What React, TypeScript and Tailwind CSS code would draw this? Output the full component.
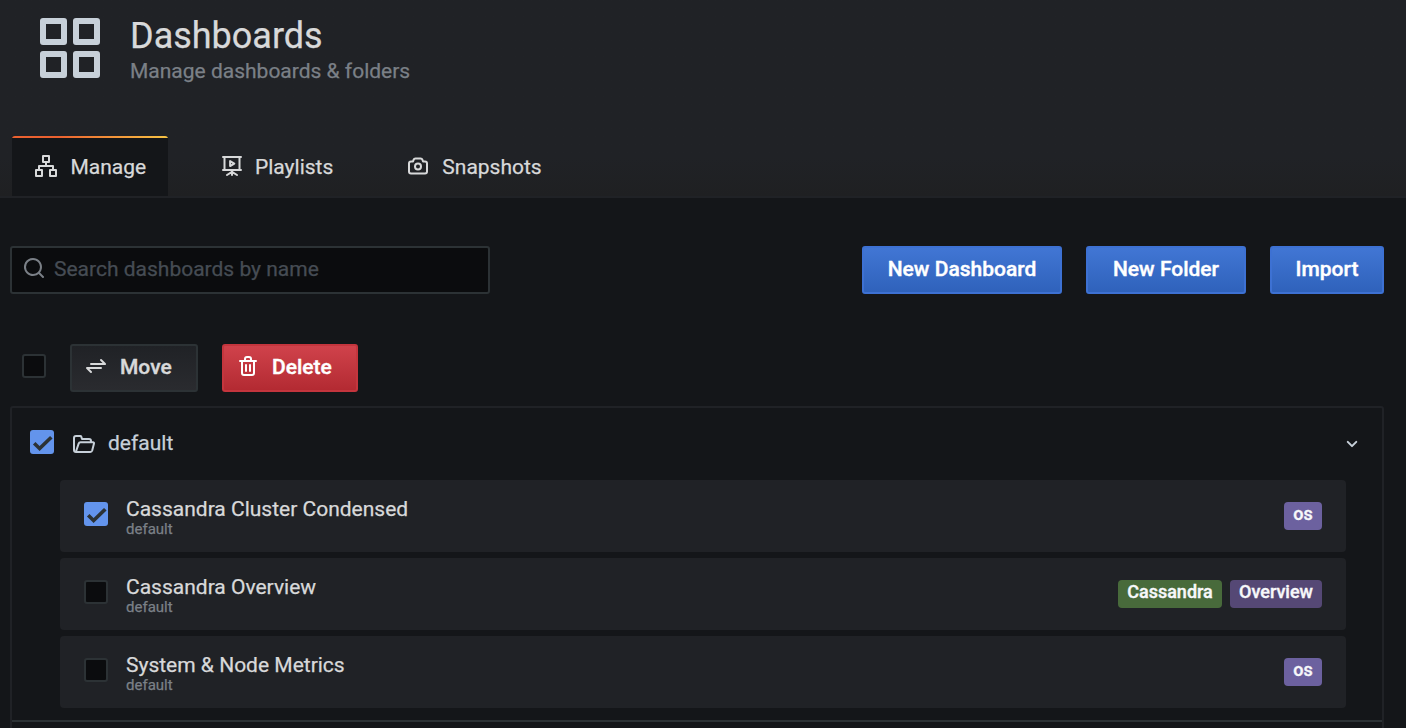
import React from 'react';

const icons = {
  apps: 'M10,13H3a1,1,0,0,0-1,1v7a1,1,0,0,0,1,1h7a1,1,0,0,0,1-1V14A1,1,0,0,0,10,13ZM9,20H4V15H9ZM21,2H14a1,1,0,0,0-1,1v7a1,1,0,0,0,1,1h7a1,1,0,0,0,1-1V3A1,1,0,0,0,21,2ZM20,9H15V4h5Zm1,4H14a1,1,0,0,0-1,1v7a1,1,0,0,0,1,1h7a1,1,0,0,0,1-1V14A1,1,0,0,0,21,13Zm-1,7H15V15h5ZM10,2H3A1,1,0,0,0,2,3v7a1,1,0,0,0,1,1h7a1,1,0,0,0,1-1V3A1,1,0,0,0,10,2ZM9,9H4V4H9Z',
  sitemap:
    'M22,15H20V12a1,1,0,0,0-1-1H13V9h2a1,1,0,0,0,1-1V2a1,1,0,0,0-1-1H9A1,1,0,0,0,8,2V8A1,1,0,0,0,9,9h2v2H5a1,1,0,0,0-1,1v3H2a1,1,0,0,0-1,1v6a1,1,0,0,0,1,1H8a1,1,0,0,0,1-1V16a1,1,0,0,0-1-1H6V13H18v2H16a1,1,0,0,0-1,1v6a1,1,0,0,0,1,1h6a1,1,0,0,0,1-1V16A1,1,0,0,0,22,15ZM7,17v4H3V17ZM10,7V3h4V7ZM21,21H17V17h4Z',
  camera:
    'M19,6.5H17.72l-.32-1a3,3,0,0,0-2.84-2H9.44A3,3,0,0,0,6.6,5.55l-.32,1H5a3,3,0,0,0-3,3v8a3,3,0,0,0,3,3H19a3,3,0,0,0,3-3v-8A3,3,0,0,0,19,6.5Zm1,11a1,1,0,0,1-1,1H5a1,1,0,0,1-1-1v-8a1,1,0,0,1,1-1H7a1,1,0,0,0,1-.68l.54-1.64a1,1,0,0,1,.95-.68h5.12a1,1,0,0,1,.95.68l.54,1.64a1,1,0,0,0,.9.68h2a1,1,0,0,1,1,1Zm-8-9a4,4,0,1,0,4,4A4,4,0,0,0,12,8.5Zm0,6a2,2,0,1,1,2-2A2,2,0,0,1,12,14.5Z',
  search:
    'M21.71,20.29,18,16.61A9,9,0,1,0,16.61,18l3.68,3.68a1,1,0,0,0,1.42,0A1,1,0,0,0,21.71,20.29ZM11,18a7,7,0,1,1,7-7A7,7,0,0,1,11,18Z',
  exchange:
    'M21.71,9.29l-4-4a1,1,0,0,0-1.42,1.42L18.59,9H7a1,1,0,0,0,0,2H21a1,1,0,0,0,.92-.62A1,1,0,0,0,21.71,9.29ZM17,13H3a1,1,0,0,0-.92.62,1,1,0,0,0,.21,1.09l4,4a1,1,0,0,0,1.42,0,1,1,0,0,0,0-1.42L5.41,15H17a1,1,0,0,0,0-2Z',
  trash:
    'M10,18a1,1,0,0,0,1-1V11a1,1,0,0,0-2,0v6A1,1,0,0,0,10,18ZM20,6H16V5a3,3,0,0,0-3-3H11A3,3,0,0,0,8,5V6H4A1,1,0,0,0,4,8H5V19a3,3,0,0,0,3,3h8a3,3,0,0,0,3-3V8h1a1,1,0,0,0,0-2ZM10,5a1,1,0,0,1,1-1h2a1,1,0,0,1,1,1V6H10Zm7,14a1,1,0,0,1-1,1H8a1,1,0,0,1-1-1V8H17Zm-3-1a1,1,0,0,0,1-1V11a1,1,0,0,0-2,0v6A1,1,0,0,0,14,18Z',
  angleDown:
    'M17,9.17a1,1,0,0,0-1.41,0L12,12.71,8.46,9.17a1,1,0,0,0-1.41,0,1,1,0,0,0,0,1.42l4.24,4.24a1,1,0,0,0,1.42,0L17,10.59A1,1,0,0,0,17,9.17Z',
};

function Icon({ name, className = 'size-6' }: { name: keyof typeof icons; className?: string }) {
  return (
    <svg viewBox="0 0 24 24" fill="currentColor" className={`shrink-0 ${className}`}>
      <path d={icons[name]} />
    </svg>
  );
}

function PresentationIcon() {
  return (
    <svg viewBox="0 0 24 24" fill="none" stroke="currentColor" strokeWidth="2" strokeLinecap="round" strokeLinejoin="round" className="size-6 shrink-0">
      <path d="M3 3h18M4.5 3v12.5M19.5 3v12.5M3 16h18M12 16v5M12 17.8l-5 3.2M12 17.8l5 3.2" />
      <path d="M10.1 7.1v5l4.2-2.5z" strokeWidth="2" />
    </svg>
  );
}

function FolderOpenIcon() {
  return (
    <svg viewBox="0 0 24 24" fill="none" stroke="currentColor" strokeWidth="2" strokeLinecap="round" strokeLinejoin="round" className="size-6 shrink-0">
      <path d="M5.6 20H4a2 2 0 0 1-2-2V6a2 2 0 0 1 2-2h4.3a1 1 0 0 1 .95.68L10 7h7a2 2 0 0 1 2 2v1" />
      <path d="M8.6 10.2H21a1 1 0 0 1 1 1.25l-1.8 7.1A2 2 0 0 1 18.3 20H5.2a1 1 0 0 1-.95-1.3l2.4-7.1a2 2 0 0 1 1.95-1.4z" />
    </svg>
  );
}

function Checkbox({ checked = false }: { checked?: boolean }) {
  return checked ? (
    <span className="block size-6 shrink-0 rounded-[3px] bg-[#6394ec]">
      <svg viewBox="0 0 24 24" fill="none" stroke="#2c3235" strokeWidth="3.6" className="size-6">
        <path d="M4.2 13.3l5.4 5.2L21.3 7.2" />
      </svg>
    </span>
  ) : (
    <span className="block size-6 shrink-0 rounded-[3px] border-2 border-[#2c3235] bg-[#0b0c0e]" />
  );
}

const tagColors = {
  violet: 'bg-[#6c619f]',
  green: 'bg-[#486a3b]',
  plum: 'bg-[#554875]',
};

type Tag = { label: string; color: keyof typeof tagColors; width: string };

const dashboards: { title: string; checked: boolean; tags: Tag[] }[] = [
  { title: 'Cassandra Cluster Condensed', checked: true, tags: [{ label: 'os', color: 'violet', width: 'w-[38px]' }] },
  {
    title: 'Cassandra Overview',
    checked: false,
    tags: [
      { label: 'Cassandra', color: 'green', width: 'w-[104px]' },
      { label: 'Overview', color: 'plum', width: 'w-[92px]' },
    ],
  },
  { title: 'System & Node Metrics', checked: false, tags: [{ label: 'os', color: 'violet', width: 'w-[38px]' }] },
];

function PrimaryButton({ label, width }: { label: string; width: string }) {
  return (
    <button
      className={`flex h-12 items-center justify-center rounded-[3px] border-2 border-[#3d71d3] bg-linear-to-b from-[#4176d4] to-[#2f62bb] pb-0.5 text-[21px] font-medium text-white [-webkit-text-stroke:0.4px] ${width}`}
    >
      {label}
    </button>
  );
}

export default function App() {
  return (
    <div className="h-[728px] overflow-hidden bg-[#141619] font-[Roboto,sans-serif] text-[21px] leading-[30px] text-[#d8d9da] [-webkit-text-stroke:0.25px]">
      <header className="flex h-[198px] flex-col justify-between border-b-2 border-[#202226] bg-linear-to-b from-[#202226] from-80% to-[#1f2022]">
        <div className="flex pt-3 pl-[34px]">
          <Icon name="apps" className="size-[72px] text-[#c7d0d9]" />
          <div className="pl-6">
            <h1 className="pt-[3px] text-[36px] leading-[42px]">Dashboards</h1>
            <p className="pt-px text-[#7b8087] leading-[26px]">Manage dashboards &amp; folders</p>
          </div>
        </div>
        <nav className="flex h-[60px] pl-3">
          <a className="flex w-[156px] flex-col overflow-hidden rounded-t-[3px] bg-[#141619]">
            <span className="h-0.5 bg-linear-to-r from-[#eb6130] from-30% to-[#f6c344]" />
            <span className="flex h-14 items-center gap-[12.5px] pl-[22px]">
              <Icon name="sitemap" />
              <span className="pt-0.5">Manage</span>
            </span>
          </a>
          <a className="ml-[52px] flex h-[58px] items-center gap-[11px] pt-0.5">
            <PresentationIcon />
            <span className="pt-0.5">Playlists</span>
          </a>
          <a className="ml-[73px] flex h-[58px] items-center gap-3 pt-0.5">
            <Icon name="camera" />
            <span className="pt-0.5">Snapshots</span>
          </a>
        </nav>
      </header>

      <main className="pr-[22px] pl-2.5">
        <div className="flex gap-6 pt-12">
          <div className="mr-auto flex h-12 w-[480px] items-center gap-2 rounded-[3px] border-2 border-[#2c3235] bg-[#0b0c0e] pb-1 pl-2.5 text-[#464c54]">
            <Icon name="search" className="size-6 text-[#7b8087]" />
            <span className="pt-0.5">Search dashboards by name</span>
          </div>
          <PrimaryButton label="New Dashboard" width="w-[200px]" />
          <PrimaryButton label="New Folder" width="w-[160px]" />
          <PrimaryButton label="Import" width="w-[114px]" />
        </div>

        <div className="flex pt-[50px] pl-3">
          <div className="mr-6 pt-2.5">
            <Checkbox />
          </div>
          <button className="mr-6 flex h-12 w-32 items-center gap-3 rounded-[3px] border-2 border-[#2c3235] bg-linear-to-b from-[#202226] to-[#2a2b2f] pb-1 pl-3 font-medium [-webkit-text-stroke:0.4px]">
            <Icon name="exchange" />
            <span className="pt-0.5">Move</span>
          </button>
          <button className="flex h-12 w-[136px] items-center gap-3 rounded-[3px] border-2 border-[#c4353d] bg-linear-to-b from-[#d0424b] to-[#b32a32] pb-1 pl-3 font-medium text-white [-webkit-text-stroke:0.4px]">
            <Icon name="trash" />
            <span className="pt-0.5">Delete</span>
          </button>
        </div>

        <section className="mt-3.5 h-[340px] rounded-[3px] border-2 border-[#202226]">
          <div className="flex h-[72px] items-center pr-[18px] pl-[18px] text-[#c7d0d9]">
            <div className="pb-1">
              <Checkbox checked />
            </div>
            <div className="ml-[18px]">
              <FolderOpenIcon />
            </div>
            <span className="mr-auto ml-3 pb-0.5">default</span>
            <Icon name="angleDown" />
          </div>
          <div className="flex flex-col gap-1.5 pr-9 pb-3 pl-12">
            {dashboards.map((dashboard) => (
              <article key={dashboard.title} className="flex h-[72px] items-center rounded bg-[#202226] px-6">
                <div className="pb-1">
                  <Checkbox checked={dashboard.checked} />
                </div>
                <div className="mr-auto ml-[18px] pt-0.5">
                  <h2 className="leading-6">{dashboard.title}</h2>
                  <p className="text-[15px] leading-4 text-[#7b8087]">default</p>
                </div>
                <div className="flex gap-2">
                  {dashboard.tags.map((tag) => (
                    <span
                      key={tag.label}
                      className={`flex h-7 items-center justify-center rounded pb-1 text-[18px] font-medium text-[#f7f8fa] [-webkit-text-stroke:0.4px] ${tagColors[tag.color]} ${tag.width}`}
                    >
                      {tag.label}
                    </span>
                  ))}
                </div>
              </article>
            ))}
          </div>
          <div className="border-t-2 border-[#2c3235]" />
        </section>
      </main>
    </div>
  );
}
